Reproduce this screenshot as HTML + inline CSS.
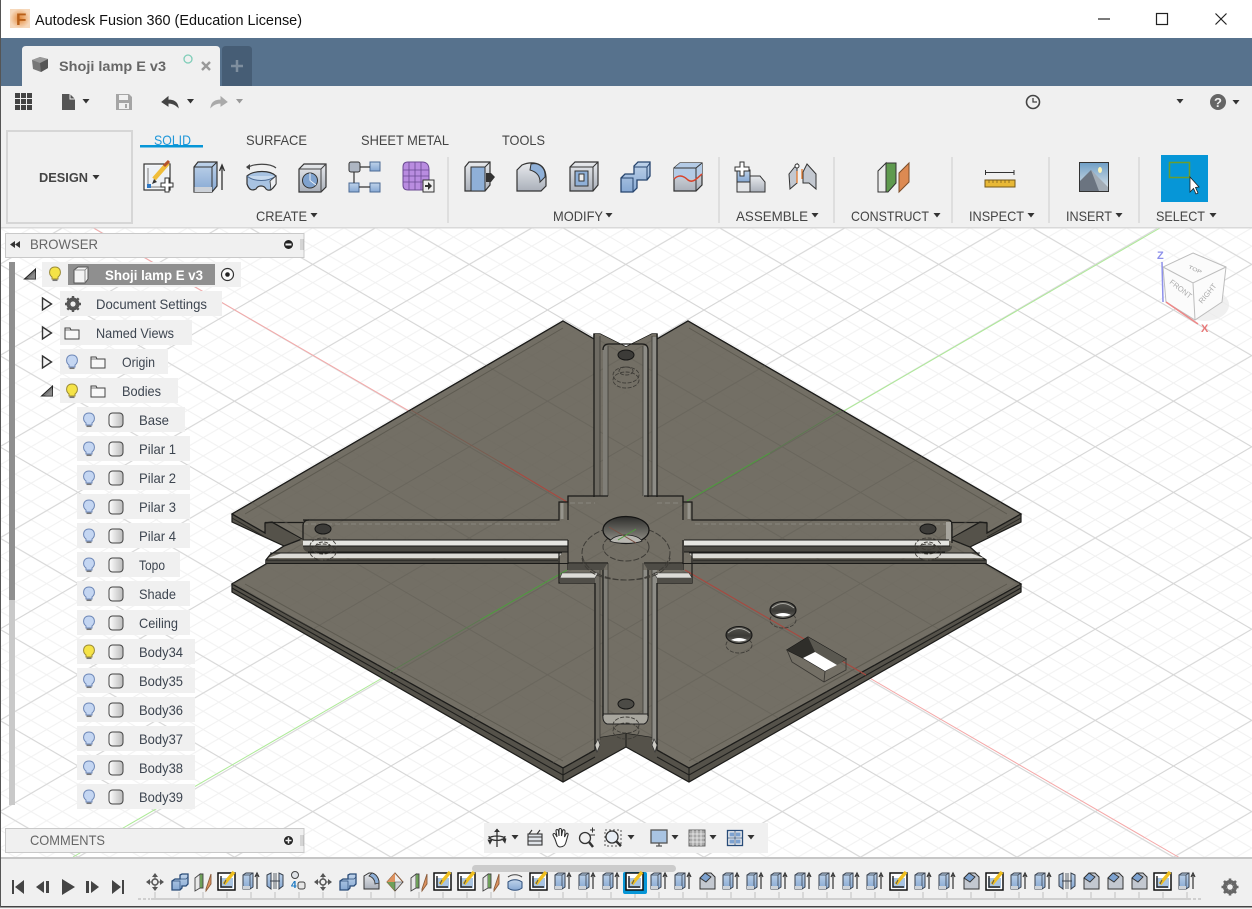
<!DOCTYPE html>
<html><head><meta charset="utf-8"><title>Fusion 360</title>
<style>html,body{margin:0;padding:0;background:#fff;overflow:hidden}svg{display:block}text{font-family:"Liberation Sans",sans-serif}</style></head>
<body>
<svg width="1252" height="909" viewBox="0 0 1252 909" xmlns="http://www.w3.org/2000/svg">
<defs>
<pattern id="gMin" patternUnits="userSpaceOnUse" width="31.3" height="18.24" patternTransform="translate(704,310)"><path d="M0,0L31.3,18.24M0,18.24L31.3,0" stroke="#f1f1f1" stroke-width="1" fill="none"/></pattern>
<pattern id="gMaj" patternUnits="userSpaceOnUse" width="156.5" height="91.2" patternTransform="translate(704,310)"><path d="M0,0L156.5,91.2M0,91.2L156.5,0" stroke="#d6d6d6" stroke-width="1" fill="none"/></pattern>
<pattern id="gDark" patternUnits="userSpaceOnUse" width="156.5" height="91.2" patternTransform="translate(704,310)"><path d="M0,0L156.5,91.2M0,91.2L156.5,0" stroke="#5f5c53" stroke-width="1" fill="none"/></pattern>
<pattern id="gDark2" patternUnits="userSpaceOnUse" width="31.3" height="18.24" patternTransform="translate(704,310)"><path d="M0,0L31.3,18.24M0,18.24L31.3,0" stroke="#69655b" stroke-width="1" fill="none"/></pattern>
<linearGradient id="blue" x1="0" y1="0" x2="0" y2="1"><stop offset="0" stop-color="#bfd3ea"/><stop offset="1" stop-color="#86a8d3"/></linearGradient>
<linearGradient id="gray" x1="0" y1="0" x2="0" y2="1"><stop offset="0" stop-color="#e8eaed"/><stop offset="1" stop-color="#aab0ba"/></linearGradient>
<linearGradient id="hole" x1="0" y1="0" x2="0" y2="1"><stop offset="0" stop-color="#2f2f2d"/><stop offset=".7" stop-color="#77766f"/><stop offset="1" stop-color="#9c9b95"/></linearGradient>
<linearGradient id="hole2" x1="0" y1="0" x2="0" y2="1"><stop offset="0" stop-color="#55544f"/><stop offset=".55" stop-color="#3b3a36"/><stop offset="1" stop-color="#6b6a64"/></linearGradient>
<linearGradient id="bodyg" x1="0" y1="0" x2="1" y2="0"><stop offset="0" stop-color="#fff"/><stop offset="1" stop-color="#bbb"/></linearGradient>
<linearGradient id="sky" x1="0" y1="0" x2="0" y2="1"><stop offset="0" stop-color="#6f9fc6"/><stop offset="1" stop-color="#e2e7ea"/></linearGradient>
<radialGradient id="logo"><stop offset="0" stop-color="#e58a3a"/><stop offset="1" stop-color="#f6d8bb"/></radialGradient>

<g id="ext"><path d="M-8,-6 L-5,-8 L2,-8 L2,6 L-1,8 L-8,8Z" fill="url(#blue)" stroke="#39414d" stroke-width="1"/><path d="M-8,-6 L-1,-6 L2,-8 M-1,-6 V8" fill="none" stroke="#39414d" stroke-width=".8"/><path d="M-8,5 H-1 V8 H-8Z" fill="#cdd2d8"/><path d="M6,8 V-6 M4,-4 L6,-8 L8,-4" fill="none" stroke="#333" stroke-width="1.2"/></g>
<g id="sk"><rect x="-9" y="-8" width="17" height="17" fill="#fff" stroke="#111" stroke-width="1.5"/><rect x="-7" y="-3" width="13" height="10" fill="#a9c4e2"/><path d="M-6,-5 V6 H5" fill="none" stroke="#222" stroke-width="1.4"/><path d="M-3,3 L7,-9" stroke="#f0c020" stroke-width="3.4"/><path d="M-3,3 L-1,-1" stroke="#555" stroke-width="1"/></g>
<g id="pl"><path d="M-8,-4 L-3,-8 V6 L-8,9Z" fill="#e8e8e8" stroke="#444" stroke-width=".9"/><path d="M-3,-8 L0,-8 V6 L-3,6" fill="#6ea05a" stroke="#444" stroke-width=".9"/><path d="M3,7 L8,-8 V2 L3,9Z" fill="#dd925f" stroke="#8a5b3a" stroke-width=".9"/></g>
<g id="cha"><path d="M-7,-3 L-2,-8 H4 L8,-4 V8 H-7Z" fill="#c3c8d0" stroke="#333" stroke-width="1"/><path d="M-7,-3 L-2,-8 L4,-4 L-1,1Z" fill="#7da2d0" stroke="#333" stroke-width=".9"/></g>
<g id="cmb"><path d="M-7,-1 L-4,-3 H1 V-7 L3,-8 H9 V2 L7,4 H3 V6 L1,8 H-7Z" fill="url(#blue)" stroke="#2b4c78" stroke-width="1.3"/><path d="M1,-3 H7 L9,-5 M-7,-1 H1 V8" fill="none" stroke="#2b4c78" stroke-width=".7"/></g>
<g id="mov" fill="#555"><path d="M0,-9 L3,-5 H-3Z M0,9 L3,5 H-3Z M-9,0 L-5,-3 V3Z M9,0 L5,-3 V3Z"/><circle r="3" fill="none" stroke="#555" stroke-width="1.5"/><path d="M0,-5 V-3 M0,3 V5 M-5,0 H-3 M3,0 H5" stroke="#555"/></g>
<g id="mir"><path d="M-8,-6 L-4,-8 V8 L-8,5Z M8,-6 L4,-8 V8 L8,5Z" fill="url(#blue)" stroke="#39414d"/><path d="M-1,-8 V8 M1,-8 V8" stroke="#39414d" stroke-width=".8"/><path d="M-5,0 H5" stroke="#39414d"/></g>
<g id="pat"><circle cx="-4" cy="-6" r="3.5" fill="#dfe2e6" stroke="#444"/><rect x="-1" y="1" width="7" height="7" rx="2" fill="#e6e6e6" stroke="#444"/><text x="-8" y="7" font-size="10" font-weight="bold" fill="#1a78c2">4</text></g>
<g id="fil"><path d="M-7,8 V-5 L-2,-8 H1 C5,-7 8,-3 8,2 V8Z" fill="url(#gray)" stroke="#333"/><path d="M1,-8 C5,-7 8,-3 8,2 L4,3 C4,-2 1,-4 -2,-5Z" fill="#8fb0d8" stroke="#333" stroke-width=".8"/></g>
<g id="spl"><path d="M0,-9 L8,0 L0,9 L-8,0Z" fill="#eee" stroke="#8a5b3a"/><path d="M0,-9 L-8,0 L0,0Z" fill="#e0935f"/><path d="M-8,0 L0,9 V0Z" fill="#6ea05a"/><path d="M0,0 L8,0 L0,9Z" fill="#cfd3d8" stroke="#444" stroke-width=".6"/></g>
<g id="rev"><path d="M-7,-5 C-3,-8 3,-8 7,-5" fill="none" stroke="#444" stroke-width="1.1"/><path d="M-7,0 C-3,-3 3,-3 7,0 V6 C3,9 -3,9 -7,6Z" fill="url(#blue)" stroke="#2b4c78"/></g>
<g id="tri"><path d="M-4.5,-6 L4.5,0 L-4.5,6Z" fill="#f3f3f3" stroke="#333" stroke-width="1.4"/></g>
<g id="triO"><path d="M-5.5,5 H5.5 V-5Z" fill="#777" stroke="#222" stroke-width="1"/><path d="M-2,5 H5.5 V-2Z" fill="#aaa" opacity=".4"/></g>
<g id="bB"><path d="M-3,3 C-7,0 -6,-7 0,-7 C6,-7 7,0 3,3 V5 H-3Z" fill="#c4d6f2" stroke="#6c86b6" stroke-width="1"/><path d="M-2.5,6.3 H2.5" stroke="#777" stroke-width="1.5"/></g>
<g id="bY"><path d="M-3,3 C-7,0 -6,-7 0,-7 C6,-7 7,0 3,3 V5 H-3Z" fill="#f5e347" stroke="#9a8a35" stroke-width="1"/><path d="M-2.5,6.3 H2.5" stroke="#777" stroke-width="1.5"/></g>
<g id="fld"><path d="M-7,-5 H-2 L-1,-3 H7 V6 H-7Z" fill="#f8f8f8" stroke="#444" stroke-width="1"/><path d="M-7,-3 H7" stroke="#444" stroke-width=".7"/></g>
<g id="bdy"><rect x="-7" y="-7" width="14" height="14" rx="3.5" fill="url(#bodyg)" stroke="#444" stroke-width="1"/></g>
<g id="dn"><path d="M-3.5,-2 H3.5 L0,2.5Z"/></g>
</defs>

<!-- base -->
<rect width="1252" height="909" fill="#fff"/>
<rect y="228" width="1252" height="630" fill="url(#gMin)"/>
<rect y="228" width="1252" height="630" fill="url(#gMaj)"/>
<path d="M90,226 L1180,858" stroke="#f5a8a8" stroke-width="1"/>
<path d="M73,857 L1160,228" stroke="#aeea98" stroke-width="1"/>

<!-- MODEL -->
<path d="M563,321 L594,339 594,334 600,334 626,347 652,334 657,334 657,339 688,321 L1021,514 1021,522 970,547 980,556 986,560 986,564 1021,584 1021,592 689,782 626,747 563,782 232,592 232,584 266,564 266,560 270,555 284,546 232,522 232,514Z" fill="#55524a" stroke="#1c1c1a" stroke-width="1.2"/>
<path d="M563,321 L594,339 594,334 600,334 626,347 652,334 657,334 657,339 688,321 L1021,514 987,533 987,523 980,522 950,539 970,547 980,556 986,560 986,564 1021,584 689,768 657,750 657,743 652,737 626,733 600,737 595,743 595,750 563,768 232,584 266,564 266,560 270,555 284,546 302,539 272,522 265,523 265,533 232,514Z" fill="#736f65" stroke="#1c1c1a" stroke-width="1.3"/>
<path d="M272,522 H306 V541 H303Z M980,522 H946 V541 H949Z" fill="#736f65"/>
<path d="M265,522.500 H305 M987,522.500 H947" stroke="#1c1c1a" stroke-width="1.200"/>
<path d="M272,522 L302,539 M980,522 L950,539" stroke="#1c1c1a" stroke-width="1.200"/>
<!-- central cross fill -->
<path d="M595,334 L600,334 L626,347 L652,334 H657 V496 H683 V520 H948 Q952,520 952,525 V563 H683 V583 H657 V745 L652,737 L626,733 L600,737 L595,745 V583 H568 V563 H303 V520 H568 V496 H595Z" fill="#736f65"/>
<g>
<path d="M563,321 L594,339 594,334 600,334 626,347 652,334 657,334 657,339 688,321 L1021,514 987,533 987,523 980,522 950,539 970,547 980,556 986,560 986,564 1021,584 689,768 657,750 657,743 652,737 626,733 600,737 595,743 595,750 563,768 232,584 266,564 266,560 270,555 284,546 302,539 272,522 265,523 265,533 232,514Z" fill="url(#gDark2)" opacity=".18"/>
<path d="M563,321 L594,339 594,334 600,334 626,347 652,334 657,334 657,339 688,321 L1021,514 987,533 987,523 980,522 950,539 970,547 980,556 986,560 986,564 1021,584 689,768 657,750 657,743 652,737 626,733 600,737 595,743 595,750 563,768 232,584 266,564 266,560 270,555 284,546 302,539 272,522 265,523 265,533 232,514Z" fill="url(#gDark)" opacity=".45"/>
</g>
<!-- plate inset lines -->
<path d="M563,328 L245,514 M689,328 L1007,514 M245,584 L563,761 M1007,584 L689,761" stroke="#5d5a50" stroke-width="1" fill="none"/>
<path d="M232,588 L563,775 L595,757 M1021,588 L689,775 L657,757 M563,768 V782 M689,768 V782 M232,584 V592 M1021,584 V592 M626,733 V747" stroke="#1f1f1d" stroke-width="1.1" fill="none"/>
<path d="M232,518 L265,537 M1021,518 L987,537" stroke="#2c2b27" stroke-width="1"/>
<!-- axes seen through -->
<path d="M411,410 L500,462" stroke="#7a5c50" stroke-width="1"/>
<path d="M500,462 L567,502 M685,570 L866,675" stroke="#a8483f" stroke-width="1.1"/>
<path d="M390,672 L480,620" stroke="#5c7a50" stroke-width="1"/>
<path d="M480,620 L567,570 M687,501 L770,453" stroke="#4f9a3f" stroke-width="1.1"/>
<path d="M770,453 L841,410" stroke="#5c7a50" stroke-width="1"/>
<!-- vertical upper -->
<g>
<rect x="594" y="337" width="6" height="159" fill="#6e6b63"/><rect x="603" y="346" width="5" height="150" fill="#807e77"/><rect x="643" y="346" width="5" height="150" fill="#8d8c86"/><rect x="652" y="337" width="5" height="159" fill="#8d8c86"/>
<path d="M594,334 V497 M603,350 Q603,344 609,344 H642 Q648,344 648,350 V497 M657,334 V497" stroke="#1b1b19" stroke-width="1.3" fill="none"/>
<path d="M600,336 V496 M608,346 V496 M643,346 V496 M652,336 V496" stroke="#3e3c37" stroke-width=".8" fill="none"/>
</g>
<!-- vertical lower -->
<g>
<rect x="594" y="570" width="6" height="172" fill="#6e6b63"/><rect x="603" y="570" width="5" height="150" fill="#807e77"/><rect x="643" y="570" width="5" height="150" fill="#8d8c86"/><rect x="652" y="570" width="5" height="172" fill="#8d8c86"/>
<path d="M603,714 H648 Q649,722 644,724 H607 Q602,722 603,714Z" fill="#a9a79f" stroke="#222" stroke-width="1"/>
<path d="M595,583 V745 M603,564 V716 M648,564 V716 M657,583 V745" stroke="#1b1b19" stroke-width="1.3" fill="none"/>
<path d="M600,570 V740 M608,563 V714 M643,563 V714 M652,570 V740" stroke="#3e3c37" stroke-width=".8" fill="none"/>
<path d="M595,745 L598,739 L600,745 L597,752Z M657,745 L654,739 L652,745 L655,752Z" fill="#cfcdc6" stroke="#333" stroke-width=".7"/>
</g>
<!-- step outlines upper -->
<path d="M303,520 H559 V502 H568 V496 H608 M644,496 H683 V502 H692 V520 H948" stroke="#1b1b19" stroke-width="1.2" fill="none" />
<path d="M568,496 V520 M683,496 V520" stroke="#1b1b19" stroke-width="1.2" fill="none"/>
<path d="M562,503 V519 M689,503 V519" stroke="#96948c" stroke-width="3" fill="none"/>
<path d="M303,524 H556 M695,524 H948 M570,503 H595 M657,503 H681" stroke="#8a877e" stroke-width="1" stroke-dasharray="5 3" fill="none"/>
<!-- left pillar end -->
<path d="M303,540 V526 Q303,520 309,520" stroke="#1b1b19" stroke-width="1.3" fill="none"/>
<path d="M948,520 Q952,520 952,526 V543" stroke="#1b1b19" stroke-width="1.3" fill="none"/>
<path d="M946,522 H951 V541 H946Z" fill="#a7a59e"/>
<!-- strips left -->
<path d="M303,540 H568 V546 H303Z" fill="#e5e5e1"/>
<path d="M303,546 H568 V552 H308 Q303,551 303,546Z" fill="#4b4943"/>
<path d="M303,540 H568 M303,546 H568 M308,552 H568" stroke="#1b1b19" stroke-width="1" fill="none"/>
<path d="M268,558 L282,553 H562 L558,558Z" fill="#dcdbd6"/>
<path d="M266,560 H558 V563 H266Z" fill="#4b4943"/>
<path d="M270,553 H562 M266,560 H558 M266,563.5 H568" stroke="#1b1b19" stroke-width="1" fill="none"/>
<!-- strips right -->
<path d="M684,540 H949 V546 H684Z" fill="#e5e5e1"/>
<path d="M684,546 H952 V548 Q950,552 945,552 H684Z" fill="#4b4943"/>
<path d="M684,540 H949 M684,546 H950 M684,552 H945" stroke="#1b1b19" stroke-width="1" fill="none"/>
<path d="M689,553 H970 L984,558 H693Z" fill="#dcdbd6"/>
<path d="M693,560 H986 V563 H693Z" fill="#4b4943"/>
<path d="M689,553 H980 M693,560 H986 M683,563.5 H986" stroke="#1b1b19" stroke-width="1" fill="none"/>
<!-- center lower steps -->
<path d="M568,540 V570 M683,540 V570 M559,553 V583 H595 M692,553 V583 H657 M568,563 H608 M644,563 H683" stroke="#1b1b19" stroke-width="1.2" fill="none"/>
<path d="M568,564 H607 L603,570 H568Z M644,564 H683 V570 H648Z" fill="#4e4c46"/>
<path d="M562,573 H598 L595,578 H560Z M654,573 H689 L692,578 H657Z" fill="#dddcd7" stroke="#333" stroke-width=".6"/>
<path d="M560,578 H595 V583 H560Z M657,578 H692 V583 H657Z" fill="#504e48"/>
<!-- center hole -->
<ellipse cx="626" cy="553" rx="44" ry="27" fill="none" stroke="#3e3c37" stroke-width="1" stroke-dasharray="6 2"/>
<ellipse cx="626" cy="547" rx="23" ry="14" fill="none" stroke="#3e3c37" stroke-width="1" stroke-dasharray="6 2"/>
<path d="M582,558 C584,572 600,580 626,580 C652,580 668,572 670,558" fill="none" stroke="#3e3c37" stroke-width="1" stroke-dasharray="6 2"/>
<ellipse cx="626" cy="530" rx="23" ry="13.500" fill="url(#hole)" stroke="#151514" stroke-width="1.200"/>
<path d="M610,541 C615,533 637,533 642,541 C636,544 616,544 610,541Z" fill="#b8b7b1" stroke="#222" stroke-width=".8"/>
<path d="M609,527 L636,543" stroke="#7a5044" stroke-width="1"/>
<path d="M618,540 L636,529" stroke="#4f9a3f" stroke-width="1"/>
<!-- arm holes + counterbores -->
<ellipse cx="626" cy="355" rx="8" ry="5" fill="#3c3b38" stroke="#171716"/>
<ellipse cx="626" cy="704" rx="8" ry="5" fill="#4c4b46" stroke="#171716"/>
<ellipse cx="323" cy="529" rx="8" ry="5" fill="#3c3b38" stroke="#171716"/>
<ellipse cx="928" cy="529" rx="8" ry="5" fill="#3c3b38" stroke="#171716"/>
<g fill="none" stroke="#3e3c37" stroke-width=".9" stroke-dasharray="4 1.500">
<ellipse cx="626" cy="375" rx="13" ry="8"/><ellipse cx="626" cy="371" rx="7" ry="4"/><ellipse cx="626" cy="380" rx="13" ry="8"/>
<ellipse cx="626" cy="725" rx="13" ry="8"/><ellipse cx="626" cy="731" rx="13" ry="8"/>
<ellipse cx="323" cy="546" rx="13" ry="8"/><ellipse cx="323" cy="552" rx="13" ry="8"/><ellipse cx="323" cy="546" rx="7" ry="4"/>
<ellipse cx="928" cy="546" rx="13" ry="8"/><ellipse cx="928" cy="552" rx="13" ry="8"/><ellipse cx="928" cy="546" rx="7" ry="4"/>
<ellipse cx="739" cy="645" rx="13" ry="8"/><ellipse cx="783" cy="620" rx="13" ry="8"/>
</g>
<!-- plate holes -->
<g stroke="#171716" stroke-width="1.100">
<ellipse cx="739" cy="635" rx="13" ry="8.500" fill="url(#hole2)"/><path d="M728,633 Q739,624 750,633" fill="none" stroke="#aaa9a3" stroke-width="1"/><path d="M731,640 Q739,636 747,640 Q739,643 731,640Z" fill="#fff" stroke="none"/>
<ellipse cx="783" cy="610" rx="13" ry="8.500" fill="url(#hole2)"/><path d="M772,608 Q783,599 794,608" fill="none" stroke="#aaa9a3" stroke-width="1"/><path d="M775,615 Q783,611 791,615 Q783,618 775,615Z" fill="#fff" stroke="none"/>
</g>
<!-- rect hole -->
<path d="M787,650 L808,637 L846,659 L825,671 L803,658Z" fill="#3f3d38" stroke="#171716" stroke-width="1.100"/>
<path d="M808,637 L846,659 L837,665 L815,652Z" fill="#5a5850"/>
<path d="M787,650 L808,637 L815,652 L803,658Z" fill="#2f2e2a"/>
<path d="M803,658 L815,652 L837,665 L825,671Z" fill="#fff"/>
<path d="M787,650 L792,662 L824,682 L846,670 L846,659 M825,671 L824,682" stroke="#3a3833" stroke-width=".9" fill="none"/>

<!-- VIEWCUBE -->
<ellipse cx="1205" cy="305" rx="24" ry="16" fill="#e9e9e9" opacity=".7"/>
<path d="M1193,253 L1226,267 L1222,302 L1195,320 L1166,302 L1163,267Z" fill="#fbfbfb" stroke="#bdbdbd"/>
<path d="M1163,267 L1193,283 L1226,267 M1193,283 L1195,320" stroke="#bdbdbd" fill="none"/>
<path d="M1163,302 L1162,262" stroke="#8d90ea" stroke-width="1.500"/>
<path d="M1166,302 L1198,324" stroke="#e88" stroke-width="1.500"/>
<text x="1157" y="259" font-size="11" font-weight="bold" fill="#8d90ea">Z</text>
<text x="1201" y="332" font-size="11" font-weight="bold" fill="#e87878">X</text>
<text transform="translate(1188,268) rotate(25) scale(1,.7)" font-size="7" fill="#999">TOP</text>
<text transform="translate(1169,283) rotate(38)" font-size="7.500" fill="#aaa">FRONT</text>
<text transform="translate(1202,304) rotate(-50)" font-size="7.500" fill="#aaa">RIGHT</text>

<!-- TITLE BAR -->
<rect width="1252" height="38" fill="#fff"/>
<rect x="10" y="9" width="20" height="19" fill="url(#logo)"/>
<text x="16" y="25" font-size="17" font-weight="bold" fill="#b85f18">F</text>
<text x="35" y="25" font-size="15" fill="#111" textLength="267" lengthAdjust="spacingAndGlyphs">Autodesk Fusion 360 (Education License)</text>
<path d="M1098,19 H1110" stroke="#222" stroke-width="1.200"/>
<rect x="1156.500" y="13.500" width="11" height="11" fill="none" stroke="#222" stroke-width="1.200"/>
<path d="M1215.500,13.500 L1226.500,24.500 M1226.500,13.500 L1215.500,24.500" stroke="#222" stroke-width="1.200"/>

<!-- TAB BAR -->
<rect y="38" width="1252" height="48" fill="#57728d"/>
<path d="M22,86 V50 Q22,46 26,46 H216 Q220,46 220,50 V86Z" fill="#f0f0f0"/>
<path d="M222,86 V50 Q222,46 226,46 H248 Q252,46 252,50 V86Z" fill="#465d75"/>
<path d="M237,60 V72 M231,66 H243" stroke="#7e8e9e" stroke-width="2.500"/>
<path d="M32,60 L40,57 L48,59 V68 L41,72 L33,69Z" fill="#777"/><path d="M40,63 L48,59 V68 L41,72Z" fill="#555"/><path d="M32,60 L40,63 L48,59 L40,57Z" fill="#999"/>
<text x="59" y="71" font-size="14" font-weight="bold" fill="#666" textLength="107" lengthAdjust="spacingAndGlyphs">Shoji lamp E v3</text>
<circle cx="188" cy="59" r="4" fill="none" stroke="#7fcdb8" stroke-width="1.300"/>
<path d="M202,62 L210,70 M210,62 L202,70" stroke="#999" stroke-width="2.400"/>

<!-- TOOLBAR -->
<rect y="86" width="1252" height="141" fill="#f0f0f0"/>
<rect y="227" width="1252" height="1.500" fill="#d9d9d9"/>
<g fill="#444"><rect x="15" y="93" width="5" height="5"/><rect x="21" y="93" width="5" height="5"/><rect x="27" y="93" width="5" height="5"/><rect x="15" y="99" width="5" height="5"/><rect x="21" y="99" width="5" height="5"/><rect x="27" y="99" width="5" height="5"/><rect x="15" y="105" width="5" height="5"/><rect x="21" y="105" width="5" height="5"/><rect x="27" y="105" width="5" height="5"/></g>
<path d="M62,94 H70 L75,99 V110 H62Z" fill="#555"/><path d="M70,94 V99 H75" fill="none" stroke="#f0f0f0" stroke-width="1"/>
<use href="#dn" x="86" y="101" fill="#333"/>
<path d="M116,94 H129 L132,97 V110 H116Z" fill="#a5a5a5"/><rect x="119" y="95" width="9" height="5" fill="#f0f0f0"/><rect x="119" y="103" width="10" height="6" fill="#f0f0f0"/><rect x="125" y="104" width="2" height="4" fill="#a5a5a5"/>
<path d="M178,107 C177,101 172,100 168,100 V97 L162,102 L168,106 V103 C172,103 175,104 178,107Z" fill="#444" stroke="#444"/>
<use href="#dn" x="190.500" y="101" fill="#333"/>
<path d="M211,107 C212,101 217,100 221,100 V97 L227,102 L221,106 V103 C217,103 214,104 211,107Z" fill="#aaa" stroke="#aaa"/>
<use href="#dn" x="239.500" y="101" fill="#999"/>
<circle cx="1033" cy="102" r="6.500" fill="none" stroke="#444" stroke-width="1.600"/><path d="M1033,98 V102 H1037" fill="none" stroke="#444" stroke-width="1.300"/>
<use href="#dn" x="1180" y="101" fill="#333"/>
<circle cx="1218" cy="102" r="8" fill="#666"/><text x="1214" y="107" font-size="13" font-weight="bold" fill="#f0f0f0">?</text>
<use href="#dn" x="1236" y="102" fill="#333"/>

<rect x="7" y="131" width="125" height="92" fill="#f0f0f0" stroke="#d6d6d6" stroke-width="2"/>
<text x="39" y="182" font-size="13" font-weight="bold" fill="#444" textLength="49" lengthAdjust="spacingAndGlyphs">DESIGN</text>
<use href="#dn" x="96" y="177" fill="#333"/>
<text x="154" y="145" font-size="14" fill="#1f97d9" textLength="37" lengthAdjust="spacingAndGlyphs">SOLID</text>
<rect x="140" y="145" width="63" height="2.500" fill="#0696d7"/>
<g font-size="14" fill="#444">
<text x="246" y="145" textLength="61" lengthAdjust="spacingAndGlyphs">SURFACE</text>
<text x="361" y="145" textLength="88" lengthAdjust="spacingAndGlyphs">SHEET METAL</text>
<text x="502" y="145" textLength="43" lengthAdjust="spacingAndGlyphs">TOOLS</text>
<text x="256" y="221" textLength="51" lengthAdjust="spacingAndGlyphs">CREATE</text>
<text x="553" y="221" textLength="50" lengthAdjust="spacingAndGlyphs">MODIFY</text>
<text x="736" y="221" textLength="72" lengthAdjust="spacingAndGlyphs">ASSEMBLE</text>
<text x="851" y="221" textLength="78" lengthAdjust="spacingAndGlyphs">CONSTRUCT</text>
<text x="969" y="221" textLength="55" lengthAdjust="spacingAndGlyphs">INSPECT</text>
<text x="1066" y="221" textLength="46" lengthAdjust="spacingAndGlyphs">INSERT</text>
<text x="1156" y="221" textLength="49" lengthAdjust="spacingAndGlyphs">SELECT</text>
</g>
<g fill="#333"><use href="#dn" x="314" y="215"/><use href="#dn" x="609" y="215"/><use href="#dn" x="815" y="215"/><use href="#dn" x="937" y="215"/><use href="#dn" x="1031" y="215"/><use href="#dn" x="1119" y="215"/><use href="#dn" x="1213" y="215"/></g>
<g stroke="#dedede" stroke-width="2"><path d="M448,157 V223 M719,157 V223 M834,157 V223 M952,157 V223 M1049,157 V223 M1139,157 V223"/></g>

<!-- CREATE icons -->
<g transform="translate(144,164)"><rect width="26" height="26" fill="#fff" stroke="#333" stroke-width="1.200"/><rect x="1.500" y="1.500" width="23" height="23" fill="#eef1f5"/><path d="M4,4 V23 H23" fill="none" stroke="#7d7d7d"/><rect x="3" y="20" width="4" height="4" fill="#2f78c4"/><path d="M10,15 L24,-1" stroke="#f0bd3a" stroke-width="4.500"/><path d="M20,2 L25,-3" stroke="#b5532d" stroke-width="3"/><path d="M10,15 L8,20 L13,18Z" fill="#333"/><path d="M21,14 H25 V19 H29 V23 H25 V28 H21 V23 H17 V19 H21Z" fill="#fff" stroke="#333"/></g>
<g transform="translate(194,162)"><path d="M0,5 L4,0 H23 V24 L18,30 H0Z" fill="url(#blue)" stroke="#333" stroke-width="1.200"/><path d="M0,5 H18 L23,0 M18,5 V30" fill="none" stroke="#333"/><path d="M0.500,25 H18 V30 H0.500Z" fill="#ccd1d8"/><path d="M28,28 V4 M25.500,9 L28,3 L30.500,9" fill="none" stroke="#333" stroke-width="1.300"/></g>
<g transform="translate(246,164)"><path d="M1,4 C8,-1 24,-1 30,4" fill="none" stroke="#444" stroke-width="1.200"/><path d="M0,3 L4,0 V6Z" fill="#444"/><path d="M1,12 C8,6 24,6 30,12 V20 C26,27 22,27 20,25 C18,21 12,21 10,25 C6,27 3,26 1,20Z" fill="#a8c3e2" stroke="#333" stroke-width="1.200"/><path d="M1,12 C8,18 22,18 30,12" fill="#c8daee" stroke="#4b6a94"/><path d="M24,17 L30,12 V20 L25,26Z" fill="#eef0f3" stroke="#333" stroke-width=".8"/></g>
<g transform="translate(299,164)"><path d="M0,5 L5,0 H27 V23 L22,28 H0Z" fill="url(#gray)" stroke="#333" stroke-width="1.200"/><path d="M0,5 H22 L27,0 M22,5 V28" fill="none" stroke="#444"/><circle cx="11" cy="16.500" r="7.500" fill="#7fa2ce" stroke="#333"/><path d="M11,16.500 L11,9 M11,16.500 L17,21" stroke="#e8eef5"/></g>
<g transform="translate(349,162)"><rect x="0" y="0" width="11" height="10" rx="2" fill="#aeb6c2" stroke="#333"/><rect x="21" y="0" width="10" height="9" fill="url(#blue)" stroke="#4b6a94"/><rect x="0" y="21" width="10" height="9" fill="url(#blue)" stroke="#4b6a94"/><rect x="21" y="21" width="10" height="9" fill="url(#blue)" stroke="#4b6a94"/><path d="M11,5 H21 M5,10 V21 M10,25 H21" stroke="#333" stroke-width="1.200"/></g>
<g transform="translate(402,162)"><path d="M1,5 Q1,0 6,0 H20 C26,0 27,4 27,8 V22 Q27,28 20,28 H6 Q1,28 1,23Z" fill="#b98ce0" stroke="#6a4a92" stroke-width="1"/><path d="M1,8 H27 M1,14 H27 M1,20 H27 M7,0 V28 M13,0 V28 M19,0 V28" stroke="#6a4a92" stroke-width=".8"/><rect x="21" y="18" width="11" height="12" fill="#eee" stroke="#333"/><path d="M23,23 H26 V20 L30,24 L26,28 V25 H23Z" fill="#333"/></g>

<!-- MODIFY icons -->
<g transform="translate(465,162)"><path d="M0,5 L4,0 H25 V23 L20,29 H0Z" fill="url(#gray)" stroke="#333" stroke-width="1.200"/><path d="M6,5 H20 V29 H6Z M20,5 L25,0" fill="#8fb0d8" stroke="#333"/><path d="M21,11 H26 L30,15 L26,20 H21Z" fill="#333"/></g>
<g transform="translate(517,162)"><path d="M0,8 L5,3 C12,0 28,-2 29,15 V24 L24,29 H0Z" fill="url(#gray)" stroke="#333" stroke-width="1.200"/><path d="M14,2 C22,0 29,6 28,15 L23,20 C23,14 20,10 13,8Z" fill="#8fb0d8" stroke="#333"/></g>
<g transform="translate(570,162)"><path d="M0,5 L5,0 H28 V23 L23,29 H0Z" fill="url(#gray)" stroke="#333" stroke-width="1.200"/><path d="M0,5 H23 L28,0 M23,5 V29" fill="none" stroke="#333"/><rect x="5" y="9" width="13" height="15" fill="#8fb0d8" stroke="#333"/><rect x="9" y="12" width="5" height="7" fill="#eee" stroke="#333"/></g>
<g transform="translate(621,162)"><path d="M0,16 L4,12 H13 V4 L17,0 H29 V14 L26,18 H16 V26 L12,30 H0Z" fill="url(#blue)" stroke="#27456e" stroke-width="1.300"/><path d="M13,5 H26 L29,1 M26,5 V18 M0,16 H12 V30" fill="none" stroke="#27456e"/></g>
<g transform="translate(674,163)"><path d="M0,5 L6,0 H28 V22 L22,28 H0Z" fill="url(#gray)" stroke="#333" stroke-width="1.200"/><path d="M0,5 L6,0 H28 V12 L22,16 H0Z" fill="#b4cbe6"/><path d="M0,5 H22 L28,0 M22,5 V28" fill="none" stroke="#333"/><path d="M0,16 C5,11 10,13 14,17 C19,21 24,14 28,11" fill="none" stroke="#d8432b" stroke-width="1.500"/></g>

<!-- ASSEMBLE icons -->
<g transform="translate(735,162)"><path d="M15,14 H25 L30,20 V30 H15Z" fill="url(#gray)" stroke="#333"/><path d="M2,14 H15 V30 H2Z" fill="#e3e5e8" stroke="#333"/><path d="M2,8 H15 V20 H2Z" fill="url(#blue)" stroke="#333"/><path d="M5,0 H9 V5 H14 V9 H9 V14 H5 V9 H0 V5 H5Z" fill="#fff" stroke="#333"/></g>
<g transform="translate(788,163)"><path d="M1,11 L9,1 V20 L2,26Z" fill="#c3c8d0" stroke="#333"/><path d="M19,1 L28,11 V26 L21,20 H15 V9Z" fill="#c3c8d0" stroke="#333"/><path d="M9,8 V20 M14,6 V16" stroke="#e0792e" stroke-width="1.300"/><circle cx="9" cy="3" r="2" fill="#fff" stroke="#333"/></g>

<!-- CONSTRUCT -->
<g transform="translate(878,163)"><path d="M0,8 L8,0 V29 H0Z" fill="#ececec" stroke="#333"/><path d="M8,0 H18 V20 L10,29 H8Z" fill="#5f9a4f" stroke="#333"/><path d="M21,10 L31,0 V19 L21,29Z" fill="#dd8a52" stroke="#7d4e2a"/></g>
<!-- INSPECT -->
<path d="M985.500,170 V175 M985.500,172.500 H1014 M1014,170 V175" stroke="#333" fill="none"/>
<rect x="985" y="180" width="30" height="7" fill="#e8b836" stroke="#74591a"/><path d="M989,180 v3 M993,180 v3 M997,180 v3 M1001,180 v3 M1005,180 v3 M1009,180 v3" stroke="#74591a" stroke-width=".7"/>
<!-- INSERT -->
<rect x="1079.500" y="162.500" width="29" height="29" fill="url(#sky)" stroke="#333"/>
<path d="M1080,191 V181 L1091,170 L1108,188 V191Z" fill="#6b7480"/><path d="M1091,170 L1108,187 V191 H1099Z" fill="#a3acb5"/><ellipse cx="1100" cy="170" rx="2" ry="3" fill="#fdf5b5"/>
<!-- SELECT -->
<rect x="1161" y="155" width="47" height="47" fill="#0696d7"/>
<rect x="1169.500" y="162.500" width="20" height="15" fill="none" stroke="#6a9d2e" stroke-width="1.500"/>
<path d="M1190,177 V192 L1193.500,188.500 L1196,194 L1198,193 L1195.500,187.500 L1199,187Z" fill="#fff" stroke="#222" stroke-width=".8"/>

<!-- BROWSER -->
<rect x="5.500" y="233.500" width="298.500" height="24" fill="#f0f0f0" stroke="#c9c9c9"/>
<path d="M10,244.500 L15,241 V248Z M15,244.500 L20,241 V248Z" fill="#333"/>
<text x="30" y="249" font-size="14" fill="#666" textLength="68" lengthAdjust="spacingAndGlyphs">BROWSER</text>
<circle cx="288.500" cy="244.500" r="4.500" fill="#222"/><rect x="285.500" y="243.500" width="6" height="2" fill="#f0f0f0"/>
<path d="M301,239 V250 M303,239 V250" stroke="#aaa" stroke-width=".8"/>

<rect x="9" y="262" width="6" height="338" fill="#8f8f8f"/>
<rect x="9" y="600" width="6" height="205" fill="#c9c9c9"/>

<g fill="#f0f0f0">
<rect x="42" y="262" width="199" height="25"/>
<rect x="60" y="291" width="162" height="25"/>
<rect x="60" y="320" width="132" height="25"/>
<rect x="60" y="349" width="108" height="25"/>
<rect x="60" y="378" width="118" height="25"/>
<rect x="77" y="407" width="108" height="25"/>
<rect x="77" y="436" width="113" height="25"/>
<rect x="77" y="465" width="113" height="25"/>
<rect x="77" y="494" width="113" height="25"/>
<rect x="77" y="523" width="113" height="25"/>
<rect x="77" y="552" width="103" height="25"/>
<rect x="77" y="581" width="113" height="25"/>
<rect x="77" y="610" width="113" height="25"/>
<rect x="77" y="639" width="118" height="25"/>
<rect x="77" y="668" width="118" height="25"/>
<rect x="77" y="697" width="118" height="25"/>
<rect x="77" y="726" width="118" height="25"/>
<rect x="77" y="755" width="118" height="25"/>
<rect x="77" y="784" width="118" height="25"/>
</g>
<rect x="68" y="264" width="147" height="21" fill="#8f8f8f"/>
<use href="#triO" x="30" y="274"/><use href="#bY" x="55" y="274"/>
<path d="M74,270 L78,267 H88 V279 L85,283 H74Z" fill="#f3f3f3" stroke="#555"/><path d="M74,270 H85 L88,267 M85,270 V283" fill="none" stroke="#777" stroke-width=".8"/>
<text x="105" y="280" font-size="13.500" font-weight="bold" fill="#fff" textLength="98" lengthAdjust="spacingAndGlyphs">Shoji lamp E v3</text>
<circle cx="227.500" cy="274.500" r="6" fill="#fafafa" stroke="#333" stroke-width="1.200"/><circle cx="227.500" cy="274.500" r="2.300" fill="#222"/>

<use href="#tri" x="47" y="304"/><use href="#tri" x="47" y="333"/><use href="#tri" x="47" y="362"/><use href="#triO" x="47" y="391"/>
<g transform="translate(73,304)"><circle r="5" fill="none" stroke="#555" stroke-width="3"/><path d="M0,-8 V8 M-8,0 H8 M-5.700,-5.700 L5.700,5.700 M-5.700,5.700 L5.700,-5.700" stroke="#555" stroke-width="2.400"/><circle r="2.600" fill="#f0f0f0"/></g>
<use href="#fld" x="72" y="333"/>
<use href="#bB" x="72" y="362"/><use href="#fld" x="98" y="362"/>
<use href="#bY" x="72" y="391"/><use href="#fld" x="98" y="391"/>

<use href="#bB" x="89" y="420"/><use href="#bdy" x="116" y="420"/>
<use href="#bB" x="89" y="449"/><use href="#bdy" x="116" y="449"/>
<use href="#bB" x="89" y="478"/><use href="#bdy" x="116" y="478"/>
<use href="#bB" x="89" y="507"/><use href="#bdy" x="116" y="507"/>
<use href="#bB" x="89" y="536"/><use href="#bdy" x="116" y="536"/>
<use href="#bB" x="89" y="565"/><use href="#bdy" x="116" y="565"/>
<use href="#bB" x="89" y="594"/><use href="#bdy" x="116" y="594"/>
<use href="#bB" x="89" y="623"/><use href="#bdy" x="116" y="623"/>
<use href="#bY" x="89" y="652"/><use href="#bdy" x="116" y="652"/>
<use href="#bB" x="89" y="681"/><use href="#bdy" x="116" y="681"/>
<use href="#bB" x="89" y="710"/><use href="#bdy" x="116" y="710"/>
<use href="#bB" x="89" y="739"/><use href="#bdy" x="116" y="739"/>
<use href="#bB" x="89" y="768"/><use href="#bdy" x="116" y="768"/>
<use href="#bB" x="89" y="797"/><use href="#bdy" x="116" y="797"/>

<g font-size="14" fill="#3d4550">
<text x="96" y="309" textLength="111" lengthAdjust="spacingAndGlyphs">Document Settings</text>
<text x="96" y="338" textLength="78" lengthAdjust="spacingAndGlyphs">Named Views</text>
<text x="122" y="367" textLength="33" lengthAdjust="spacingAndGlyphs">Origin</text>
<text x="122" y="396" textLength="39" lengthAdjust="spacingAndGlyphs">Bodies</text>
<text x="139" y="425" textLength="30" lengthAdjust="spacingAndGlyphs">Base</text>
<text x="139" y="454" textLength="37" lengthAdjust="spacingAndGlyphs">Pilar 1</text>
<text x="139" y="483" textLength="37" lengthAdjust="spacingAndGlyphs">Pilar 2</text>
<text x="139" y="512" textLength="37" lengthAdjust="spacingAndGlyphs">Pilar 3</text>
<text x="139" y="541" textLength="37" lengthAdjust="spacingAndGlyphs">Pilar 4</text>
<text x="139" y="570" textLength="26" lengthAdjust="spacingAndGlyphs">Topo</text>
<text x="139" y="599" textLength="37" lengthAdjust="spacingAndGlyphs">Shade</text>
<text x="139" y="628" textLength="39" lengthAdjust="spacingAndGlyphs">Ceiling</text>
<text x="139" y="657" textLength="44" lengthAdjust="spacingAndGlyphs">Body34</text>
<text x="139" y="686" textLength="44" lengthAdjust="spacingAndGlyphs">Body35</text>
<text x="139" y="715" textLength="44" lengthAdjust="spacingAndGlyphs">Body36</text>
<text x="139" y="744" textLength="44" lengthAdjust="spacingAndGlyphs">Body37</text>
<text x="139" y="773" textLength="44" lengthAdjust="spacingAndGlyphs">Body38</text>
<text x="139" y="802" textLength="44" lengthAdjust="spacingAndGlyphs">Body39</text>
</g>

<!-- COMMENTS -->
<rect x="5.500" y="828.500" width="298.500" height="24" fill="#f0f0f0" stroke="#c9c9c9"/>
<text x="30" y="845" font-size="14" fill="#666" textLength="75" lengthAdjust="spacingAndGlyphs">COMMENTS</text>
<circle cx="288.500" cy="840.500" r="4.500" fill="#222"/><path d="M285.500,840.500 H291.500 M288.500,837.500 V843.500" stroke="#f0f0f0" stroke-width="1.500"/>
<path d="M301,835 V846 M303,835 V846" stroke="#aaa" stroke-width=".8"/>

<!-- NAV BAR -->
<rect x="484" y="823" width="284" height="30" fill="#f0f0f0"/>
<g transform="translate(497,838)"><path d="M0,-9 V9 M-8,-2 C-8,4 8,4 8,-2 M-8,1 C-8,-3 8,-3 8,1" fill="none" stroke="#333" stroke-width="1.300"/><path d="M-2.500,-6 L0,-9 L2.500,-6 M-7,6 L-9,2 L-5,2Z M5,1 L9,1 L8,5Z" fill="#333" stroke="#333" stroke-width=".7"/></g>
<use href="#dn" x="515" y="837" fill="#333"/>
<g transform="translate(535,839)" fill="none" stroke="#333" stroke-width="1.100"><rect x="-7" y="-5" width="14" height="11" fill="#dfe3e8"/><path d="M-7,-2 H7 M-7,2 H7 M-6,-5 L-3,-9 M2,-5 L5,-9"/></g>
<g transform="translate(560,838)" fill="#fff" stroke="#333" stroke-width="1.100"><path d="M-5,1 L-7,-3 C-7,-5 -5,-5 -4,-3 L-3,-1 L-4,-7 C-4,-9 -2,-9 -1.500,-7 L-1,-2 V-8 C-1,-10 1.500,-10 1.500,-8 V-2 L2.500,-7 C3,-9 5,-8.500 5,-6.500 L4.500,-1 L6,-4 C7,-5.500 8.500,-4.500 8,-3 L6,4 C5,8 3,9 0,9 C-3,9 -3.500,5 -5,1Z"/></g>
<g transform="translate(586,838)" fill="none" stroke="#333"><circle cx="-1" cy="0" r="5.500" stroke-width="1.300"/><path d="M3,4 L7,9" stroke-width="2.500"/><path d="M4,-8 H9 M6.500,-10.500 V-5.500 M4,-3 H9"/></g>
<g transform="translate(613,838)" fill="none" stroke="#333"><rect x="-8" y="-8" width="16" height="16" stroke-dasharray="2 2" stroke="#555"/><circle cx="-1" cy="-1" r="6" fill="#e8eef5" stroke-width="1.300"/><path d="M3,3 L8,8" stroke-width="2.500"/></g>
<use href="#dn" x="631" y="837" fill="#333"/>
<g transform="translate(659,838)"><rect x="-8" y="-8" width="16" height="13" fill="#a9c4e2" stroke="#555" stroke-width="1.300"/><path d="M-3,8 H3 M0,5 V8" stroke="#555" stroke-width="1.300"/></g>
<use href="#dn" x="675" y="837" fill="#333"/>
<g transform="translate(697,838)"><rect x="-8" y="-8" width="16" height="16" fill="#a8a8a8" stroke="#666"/><path d="M-8,-4 H8 M-8,0 H8 M-8,4 H8 M-4,-8 V8 M0,-8 V8 M4,-8 V8" stroke="#f0f0f0" stroke-width=".8"/></g>
<use href="#dn" x="713" y="837" fill="#333"/>
<g transform="translate(735,838)"><rect x="-7.500" y="-7.500" width="15" height="15" fill="#f0f0f0" stroke="#274b78" stroke-width="1.300"/><rect x="-5.500" y="-5.500" width="4.500" height="4" fill="#7da2d0"/><rect x="1" y="-5.500" width="4.500" height="4" fill="#7da2d0"/><rect x="-5.500" y="1.500" width="4.500" height="4" fill="#7da2d0"/><rect x="1" y="1.500" width="4.500" height="4" fill="#7da2d0"/><path d="M-7,0 H7 M0,-7 V7" stroke="#274b78" stroke-width=".8"/></g>
<use href="#dn" x="751" y="837" fill="#333"/>

<!-- TIMELINE -->
<rect y="857" width="1252" height="49" fill="#f0f0f0"/>
<rect y="857" width="1252" height="2" fill="#c6c6c6"/>
<rect x="472" y="865" width="204" height="7" rx="3.500" fill="#cbcbcb"/>
<rect x="151" y="898" width="1040" height="2" fill="#cfcfcf"/>
<path d="M138,899 h3 M143,899 h3 M148,899 h2 M1193,899 h3 M1198,899 h3" stroke="#cfcfcf" stroke-width="2"/>
<g stroke="#cfcfcf" stroke-width="1.500"><path d="M155,892 V898 M179,892 V898 M203,892 V898 M227,892 V898 M251,892 V898 M275,892 V898 M299,892 V898 M323,892 V898 M347,892 V898 M371,892 V898 M395,892 V898 M419,892 V898 M443,892 V898 M467,892 V898 M491,892 V898 M515,892 V898 M539,892 V898 M563,892 V898 M587,892 V898 M611,892 V898 M635,892 V898 M659,892 V898 M683,892 V898 M707,892 V898 M731,892 V898 M755,892 V898 M779,892 V898 M803,892 V898 M827,892 V898 M851,892 V898 M875,892 V898 M899,892 V898 M923,892 V898 M947,892 V898 M971,892 V898 M995,892 V898 M1019,892 V898 M1043,892 V898 M1067,892 V898 M1091,892 V898 M1115,892 V898 M1139,892 V898 M1163,892 V898 M1187,892 V898"/></g>
<rect x="623" y="872" width="24" height="22" rx="2" fill="#0696d7"/>
<use href="#mov" x="155" y="882"/><use href="#cmb" x="179" y="882"/><use href="#pl" x="203" y="882"/><use href="#sk" x="227" y="881"/><use href="#ext" x="251" y="881"/><use href="#mir" x="275" y="881"/><use href="#pat" x="299" y="881"/><use href="#mov" x="323" y="882"/><use href="#cmb" x="347" y="882"/><use href="#fil" x="371" y="881"/><use href="#spl" x="395" y="882"/><use href="#pl" x="419" y="882"/><use href="#sk" x="443" y="881"/><use href="#sk" x="467" y="881"/><use href="#pl" x="491" y="882"/><use href="#rev" x="515" y="882"/><use href="#sk" x="539" y="881"/><use href="#ext" x="563" y="881"/><use href="#ext" x="587" y="881"/><use href="#ext" x="611" y="881"/><use href="#sk" x="635" y="881"/><use href="#ext" x="659" y="881"/><use href="#ext" x="683" y="881"/><use href="#cha" x="707" y="881"/><use href="#ext" x="731" y="881"/><use href="#ext" x="755" y="881"/><use href="#ext" x="779" y="881"/><use href="#ext" x="803" y="881"/><use href="#ext" x="827" y="881"/><use href="#ext" x="851" y="881"/><use href="#ext" x="875" y="881"/><use href="#sk" x="899" y="881"/><use href="#ext" x="923" y="881"/><use href="#ext" x="947" y="881"/><use href="#cha" x="971" y="881"/><use href="#sk" x="995" y="881"/><use href="#ext" x="1019" y="881"/><use href="#ext" x="1043" y="881"/><use href="#mir" x="1067" y="881"/><use href="#cha" x="1091" y="881"/><use href="#cha" x="1115" y="881"/><use href="#cha" x="1139" y="881"/><use href="#sk" x="1163" y="881"/><use href="#ext" x="1187" y="881"/>
<g fill="#444">
<rect x="12" y="880" width="2" height="14"/><path d="M24,880 V894 L15,887Z"/>
<path d="M44,881 V893 L36,887Z"/><rect x="46" y="881" width="3" height="12"/>
<path d="M62,879 L75,887 L62,895Z"/>
<rect x="86" y="881" width="3" height="12"/><path d="M91,881 V893 L99,887Z"/>
<path d="M112,880 V894 L121,887Z"/><rect x="122" y="880" width="2" height="14"/>
</g>
<g transform="translate(1230,887)"><circle r="5.500" fill="none" stroke="#666" stroke-width="3"/><path d="M0,-8.500 V8.500 M-8.500,0 H8.500 M-6,-6 L6,6 M-6,6 L6,-6" stroke="#666" stroke-width="2.600"/><circle r="2.800" fill="#f0f0f0"/></g>

<!-- window border -->
<rect y="906" width="1252" height="1.500" fill="#444"/>
<rect y="907.500" width="1252" height="1.500" fill="#f4f4f4"/>
<rect x="0" y="0" width="1" height="907" fill="#555"/>
</svg>
</body></html>
